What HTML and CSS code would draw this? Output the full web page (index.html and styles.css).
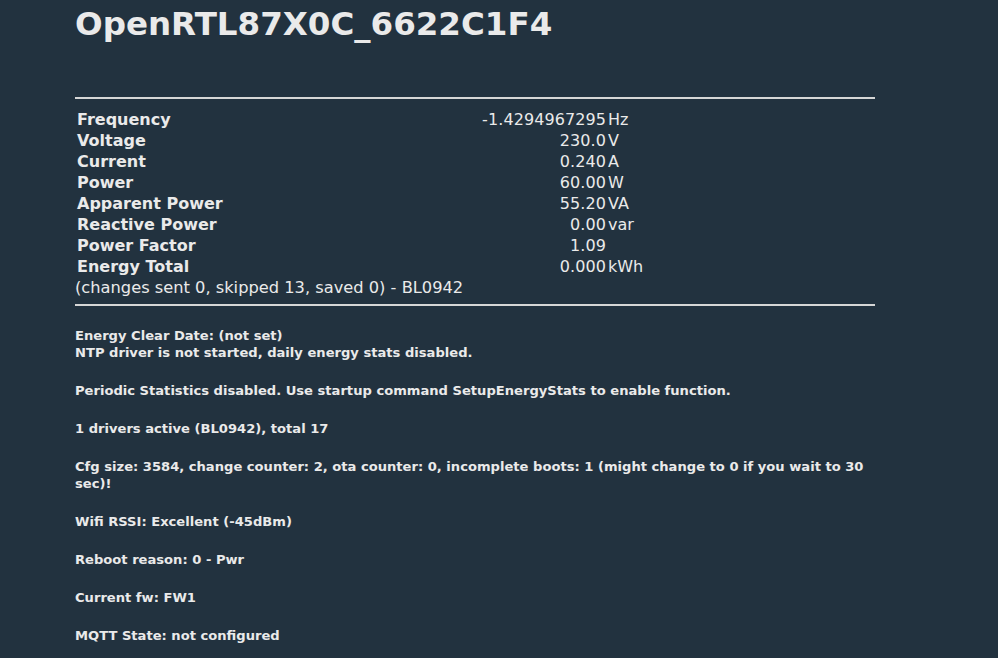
FILE: index.html
```html
<!DOCTYPE html>
<html lang="en">
<head>
    <meta charset="UTF-8">
    <meta name="viewport" content="width=device-width, initial-scale=1.0">
    <title>OpenRTL87X0C_6622C1F4</title>
    <link rel="stylesheet" href="styles.css">
</head>
<body>
    <div class="page">
        <h1 class="title">OpenRTL87X0C_6622C1F4</h1>

        <hr class="rule rule-top">

        <table class="stats">
            <tr><td class="label">Frequency</td><td class="value">-1.4294967295</td><td class="unit">Hz</td></tr>
            <tr><td class="label">Voltage</td><td class="value">230.0</td><td class="unit">V</td></tr>
            <tr><td class="label">Current</td><td class="value">0.240</td><td class="unit">A</td></tr>
            <tr><td class="label">Power</td><td class="value">60.00</td><td class="unit">W</td></tr>
            <tr><td class="label">Apparent Power</td><td class="value">55.20</td><td class="unit">VA</td></tr>
            <tr><td class="label">Reactive Power</td><td class="value">0.00</td><td class="unit">var</td></tr>
            <tr><td class="label">Power Factor</td><td class="value">1.09</td><td class="unit"></td></tr>
            <tr><td class="label">Energy Total</td><td class="value">0.000</td><td class="unit">kWh</td></tr>
        </table>
        <div class="changes">(changes sent 0, skipped 13, saved 0) - BL0942</div>

        <hr class="rule">

        <h5 class="info">Energy Clear Date: (not set)<br>NTP driver is not started, daily energy stats disabled.</h5>
        <h5 class="info">Periodic Statistics disabled. Use startup command SetupEnergyStats to enable function.</h5>
        <h5 class="info">1 drivers active (BL0942), total 17</h5>
        <h5 class="info">Cfg size: 3584, change counter: 2, ota counter: 0, incomplete boots: 1 (might change to 0 if you wait to 30 sec)!</h5>
        <h5 class="info">Wifi RSSI: Excellent (-45dBm)</h5>
        <h5 class="info">Reboot reason: 0 - Pwr</h5>
        <h5 class="info">Current fw: FW1</h5>
        <h5 class="info">MQTT State: not configured</h5>
    </div>
</body>
</html>
```

FILE: styles.css
```css
/* page */
body {
    margin: 0;
    background-color: #22323f;
    color: #eaeaea;
    font-family: "DejaVu Sans", Verdana, sans-serif;
    font-size: 16px;
}

.page {
    width: 800px;
    padding-left: 75px;
}

.title {
    margin: 0;
    padding-top: 5px;
    font-size: 32.5px;
    line-height: 38px;
    font-weight: bold;
}

/* horizontal rules */
.rule {
    height: 0;
    border: none;
    border-top: 2px solid #d6d6d6;
    margin: 6px 0;
}

.rule-top {
    margin-top: 54px;
    margin-bottom: 10px;
}

/* readings table */
.stats {
    width: 100%;
    border-collapse: collapse;
}

.stats td {
    padding: 0 2px;
    line-height: 21px;
    white-space: nowrap;
}

.stats .label {
    width: 400px;
    font-weight: bold;
}

.stats .value {
    width: 125px;
    text-align: right;
    padding-right: 1px;
    letter-spacing: 0.08px;
}

.stats .unit {
    padding-left: 1px;
}

.changes {
    font-size: 16.25px;
    line-height: 21px;
}

/* info blocks */
.info {
    margin: 21px 0;
    font-size: 13.1px;
    line-height: 17px;
    font-weight: bold;
}
```
